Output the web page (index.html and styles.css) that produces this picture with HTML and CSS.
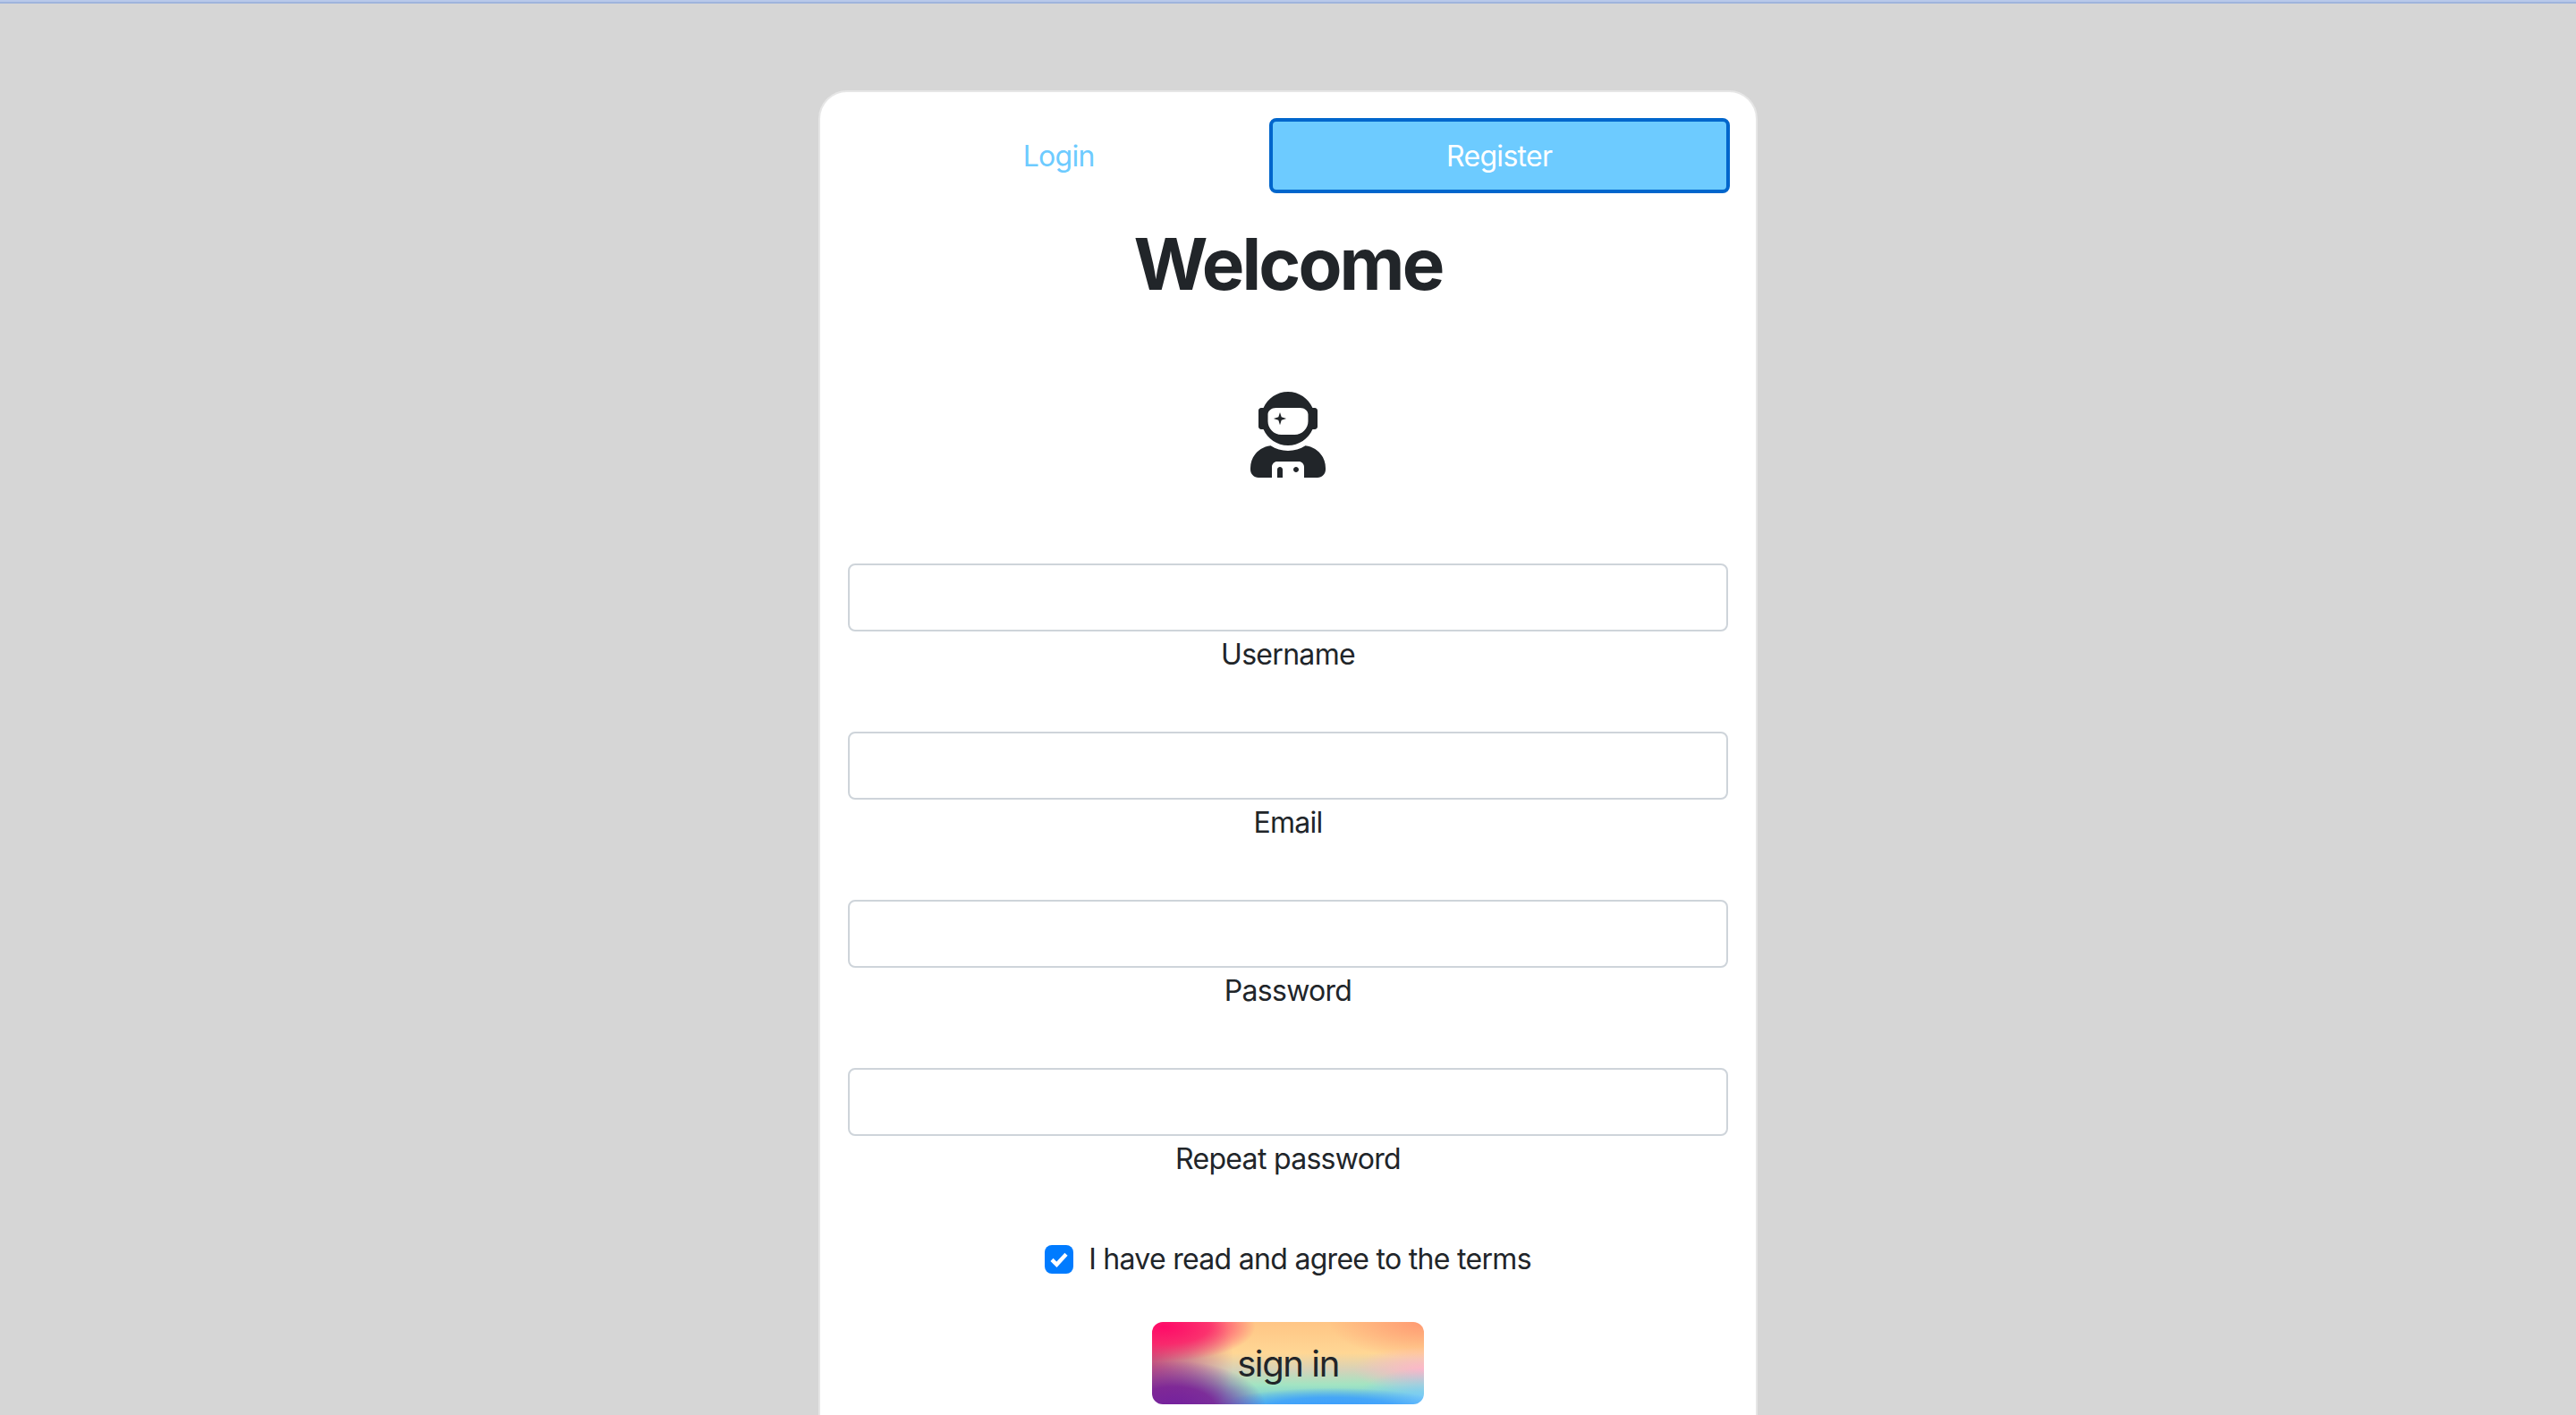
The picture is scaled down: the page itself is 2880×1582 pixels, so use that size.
FILE: index.html
```html
<!DOCTYPE html>
<html lang="en">
<head>
    <meta charset="UTF-8">
    <meta name="viewport" content="width=device-width, initial-scale=1.0">
    <title>Register</title>
    <link rel="stylesheet" href="styles.css">
</head>
<body>
    <div class="top-line"></div>
    <div class="card">
        <div class="tabs">
            <a class="tab" href="#">Login</a>
            <a class="tab active" href="#">Register</a>
        </div>
        <h1>Welcome</h1>
        <div class="avatar">
            <svg viewBox="0 0 448 512" width="84" height="96" aria-hidden="true">
                <path d="M64 224h13.5c24.7 56.5 80.9 96 146.5 96s121.8-39.5 146.5-96H384c8.8 0 16-7.2 16-16v-96c0-8.8-7.2-16-16-16h-13.5C345.8 39.5 289.6 0 224 0S102.2 39.5 77.5 96H64c-8.8 0-16 7.2-16 16v96c0 8.8 7.2 16 16 16zm40-88c0-22 21.5-40 48-40h144c26.5 0 48 18 48 40v40c0 44-36 80-80 80h-80c-44 0-80-36-80-80v-40zm72 62l9-29 29-9-29-9-9-29-9 29-29 9 29 9 9 29zm151.6 123.4C297.7 340.7 262.2 352 224 352s-73.7-11.3-103.6-30.6C52.9 328.5 0 385 0 454.4v9.6c0 26.5 21.5 48 48 48h80v-64c0-17.7 14.3-32 32-32h128c17.7 0 32 14.3 32 32v64h80c26.5 0 48-21.5 48-48v-9.6c0-69.4-52.9-125.9-120.4-133zM272 448c-8.8 0-16 7.2-16 16s7.2 16 16 16 16-7.2 16-16-7.2-16-16-16zm-96 0c-8.8 0-16 7.2-16 16v48h32v-48c0-8.8-7.2-16-16-16z"/>
            </svg>
        </div>
        <form>
            <div class="field">
                <input type="text" id="username">
                <label for="username">Username</label>
            </div>
            <div class="field">
                <input type="email" id="email">
                <label for="email">Email</label>
            </div>
            <div class="field">
                <input type="password" id="password">
                <label for="password">Password</label>
            </div>
            <div class="field">
                <input type="password" id="repeat">
                <label for="repeat">Repeat password</label>
            </div>
            <div class="terms">
                <span class="check">
                    <svg viewBox="0 0 16 16" width="32" height="32" aria-hidden="true">
                        <path d="M4 8.2l2.7 2.7 5.3-5.8" fill="none" stroke="#fff" stroke-width="2.2"/>
                    </svg>
                </span>
                <span>I have read and agree to the terms</span>
            </div>
            <div class="actions">
                <button type="button" class="sign-in">sign in</button>
            </div>
        </form>
    </div>
</body>
</html>
```

FILE: styles.css
```css
html, body {
    height: 100%;
}
body {
    margin: 0;
    height: 1582px;
    overflow: hidden;
    background-color: #d6d6d6;
    font-family: Inter, "Liberation Sans", sans-serif;
    font-size: 32px;
    line-height: 48px;
    letter-spacing: -0.022em;
    color: #212529;
}
.top-line {
    height: 2px;
    background-color: #b8c9ea;
    border-bottom: 2px solid #9fb4dc;
}
.card {
    width: 1050px;
    height: 1600px;
    box-sizing: border-box;
    margin: 97px auto 0;
    padding: 29px 31px;
    background-color: #fff;
    border: 2px solid #e6e6e6;
    border-radius: 32px;
}
.tabs {
    display: flex;
    margin: 0 -2px 31px 0;
}
.tab {
    flex: 1 1 auto;
    padding: 15px 30px 13px;
    border: 4px solid transparent;
    border-radius: 8px;
    text-align: center;
    text-decoration: none;
    color: #6dcbff;
}
.tab.active {
    padding-left: 32px;
    padding-right: 33px;
    background-color: #6dcbff;
    border-color: #0066cc;
    color: #fff;
}
h1 {
    margin: 0;
    font-size: 80px;
    line-height: 96px;
    font-weight: 700;
    letter-spacing: -0.036em;
    text-align: center;
}
.avatar {
    display: flex;
    justify-content: center;
    margin-top: 95px;
    margin-bottom: 96px;
}
.avatar svg {
    fill: #212529;
}
.field {
    margin-bottom: 62px;
    text-align: center;
}
.field input {
    display: block;
    width: 100%;
    height: 76px;
    box-sizing: border-box;
    border: 2px solid #ced4da;
    border-radius: 8px;
    background-color: #fff;
}
.field label {
    display: block;
    padding-top: 2px;
}
.terms {
    display: flex;
    justify-content: center;
    align-items: center;
    gap: 17px;
    padding-top: 2px;
    margin-bottom: 46px;
}
.check {
    display: block;
    width: 32px;
    height: 32px;
    background-color: #007bff;
    border-radius: 8px;
}
.check svg {
    display: block;
}
.actions {
    display: flex;
    justify-content: center;
}
.sign-in {
    width: 304px;
    height: 92px;
    padding: 0;
    border: none;
    border-radius: 12px;
    font-family: inherit;
    font-size: 40px;
    letter-spacing: -0.035em;
    color: #212529;
    background-color: #ffd591;
    background-image:
        radial-gradient(ellipse 34% 42% at 4% 6%, #ff0a68 0%, rgba(255, 30, 105, 0.85) 50%, rgba(255, 60, 110, 0) 100%),
        radial-gradient(ellipse 34% 58% at 8% 105%, #74209e 0%, rgba(122, 31, 150, 0.9) 45%, rgba(150, 40, 130, 0) 100%),
        radial-gradient(ellipse 34% 110% at -4% 45%, rgba(190, 50, 115, 0.9) 0%, rgba(185, 80, 130, 0.6) 50%, rgba(190, 100, 130, 0) 100%),
        radial-gradient(ellipse 44% 26% at 66% 106%, #3a9cff 0%, rgba(58, 156, 255, 0.8) 55%, rgba(58, 156, 255, 0) 100%),
        radial-gradient(ellipse 28% 45% at 102% 100%, #79c9ff 0%, rgba(121, 201, 255, 0) 100%),
        radial-gradient(ellipse 26% 28% at 100% 58%, #ffb6c8 0%, rgba(255, 182, 200, 0) 100%),
        radial-gradient(ellipse 35% 45% at 100% 0%, #ff9a72 0%, rgba(255, 154, 114, 0) 100%),
        linear-gradient(180deg, #ffc585 0%, #ffd795 38%, #d6d2b8 58%, #a3e4c2 76%, #66c8dc 100%);
}
```
